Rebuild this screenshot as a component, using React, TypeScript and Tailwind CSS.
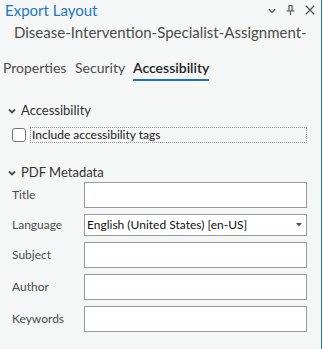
import React from "react";

const font = { fontFamily: 'Lato, "Open Sans", sans-serif' };

function Chevron() {
  return (
    <svg width="8" height="6" viewBox="0 0 8 6" className="shrink-0">
      <path d="M1 1.5 L4 4.5 L7 1.5" fill="none" stroke="#4a4a4a" strokeWidth="1.8" />
    </svg>
  );
}

function Field({ label, children, h = "h-[26px]" }: { label: string; children?: React.ReactNode; h?: string }) {
  return (
    <div className="flex items-center">
      <div className="w-[84px] shrink-0 pl-[12px] text-[12px] leading-[14px] text-[#4c4c4c]">{label}</div>
      <div className={`w-[223px] shrink-0 ${h} border border-[#9a9a9a] bg-white flex items-center`}>{children}</div>
    </div>
  );
}

export default function App() {
  return (
    <div className="w-[323px] h-[349px] bg-white" style={font}>
      <div className="w-[322px] h-[349px] bg-[#f5f6f6] border-r border-[#1f73b7] flex flex-col">
        {/* header */}
        <div className="flex items-start justify-between h-[18px]">
          <div className="pl-[5px] pt-[3px] text-[15px] leading-[15px] text-[#1f77c4]">Export Layout</div>
          <div className="flex items-start pr-[6px] pt-[5px]">
            <svg width="8" height="6" viewBox="0 0 8 6" className="mr-[10px] mt-[3px]">
              <path d="M0.8 1.2 L4 4.4 L7.2 1.2" fill="none" stroke="#555" strokeWidth="1.3" />
            </svg>
            <svg width="9" height="10" viewBox="0 0 9 10" className="mr-[10px]">
              <path d="M2.5 0.5 H6.5 M3 0.5 V6 M6 0.5 V6 M0.5 6 H8.5 M4.5 6 V10" fill="none" stroke="#555" strokeWidth="1.2" />
            </svg>
            <svg width="10" height="10" viewBox="0 0 10 10">
              <path d="M0.8 0.8 L9.2 9.2 M9.2 0.8 L0.8 9.2" fill="none" stroke="#555" strokeWidth="1.3" />
            </svg>
          </div>
        </div>
        {/* subtitle */}
        <div className="mt-[7px] pl-[14px] text-[15px] leading-[15px] text-[#4c4c4c] whitespace-nowrap">
          Disease-Intervention-Specialist-Assignment-
        </div>
        {/* tabs */}
        <div className="mt-[21px] flex items-start text-[14px] leading-[14px] h-[20px]">
          <div className="ml-[3px] w-[72px] text-[#4c4c4c]">Properties</div>
          <div className="w-[58px] text-[#4c4c4c]">Security</div>
          <div className="pb-[4px] border-b-2 border-[#1a73b9] font-semibold text-[#222]">Accessibility</div>
        </div>
        {/* Accessibility section */}
        <div className="mt-[23px] flex items-center pl-[8px] h-[13px]">
          <Chevron />
          <span className="ml-[5px] text-[13px] leading-[13px] text-[#323232]">Accessibility</span>
        </div>
        <div className="mt-[10px] flex items-center h-[16px]">
          <div className="ml-[12px] w-[14px] h-[14px] rounded-[3px] border border-[#777] bg-white" />
          <div className="ml-[4px] w-[277px] h-[16px] border border-dotted border-[#9a9a9a] flex items-center pl-[1px] text-[12px] leading-[14px] text-[#222]">
            Include accessibility tags
          </div>
        </div>
        {/* PDF Metadata */}
        <div className="mt-[23px] flex items-center pl-[8px] h-[13px]">
          <Chevron />
          <span className="ml-[5px] text-[13px] leading-[13px] text-[#323232]">PDF Metadata</span>
        </div>
        <div className="mt-[3px] flex flex-col gap-[6px]">
          <Field label="Title" />
          <Field label="Language" h="h-[22px]">
            <div className="flex-1 pl-[2px] text-[12px] leading-[14px] text-[#111] whitespace-nowrap">English (United States) [en-US]</div>
            <svg width="6" height="4" viewBox="0 0 6 4" className="mr-[4px]">
              <path d="M0 0 H6 L3 3.5 Z" fill="#555" />
            </svg>
          </Field>
          <Field label="Subject" />
          <Field label="Author" />
          <Field label="Keywords" />
        </div>
      </div>
    </div>
  );
}
